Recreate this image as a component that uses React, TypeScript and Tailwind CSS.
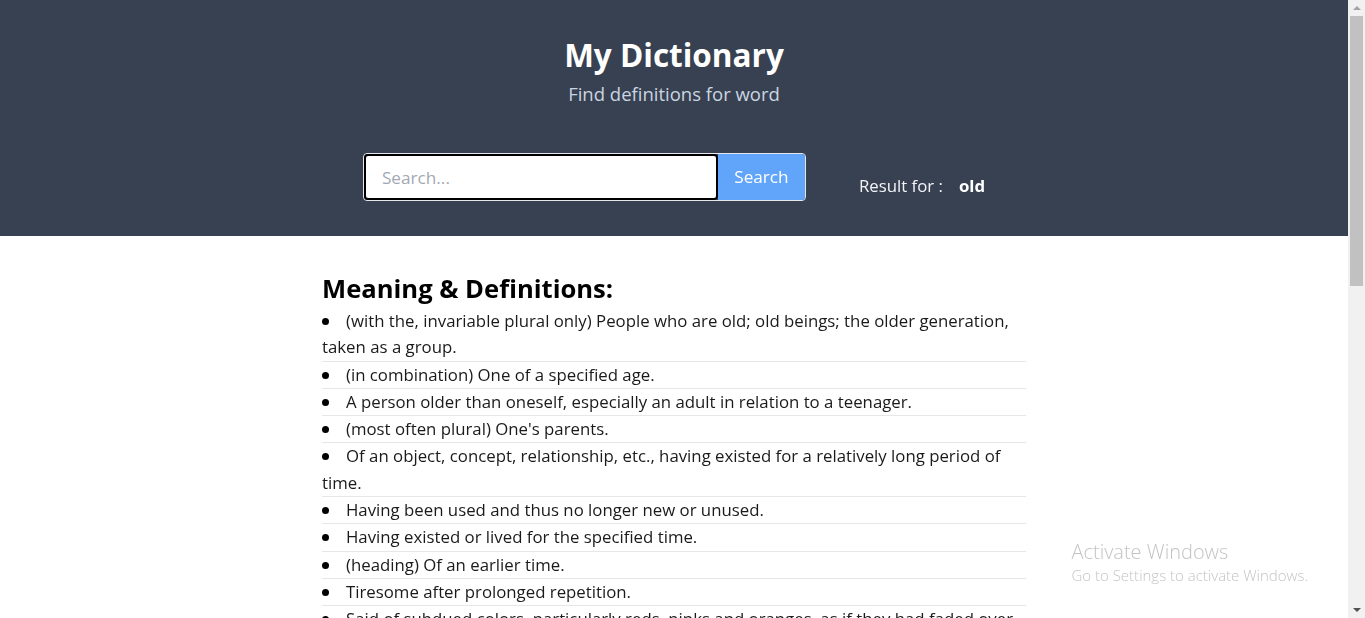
import { useState } from 'react'

const definitions = [
  '(with the, invariable plural only) People who are old; old beings; the older generation, taken as a group.',
  '(in combination) One of a specified age.',
  'A person older than oneself, especially an adult in relation to a teenager.',
  "(most often plural) One's parents.",
  'Of an object, concept, relationship, etc., having existed for a relatively long period of time.',
  'Having been used and thus no longer new or unused.',
  'Having existed or lived for the specified time.',
  '(heading) Of an earlier time.',
  'Tiresome after prolonged repetition.',
  'Said of subdued colors, particularly reds, pinks and oranges, as if they had faded over time.',
  'A grammatical intensifier, often used in describing something positive.',
  'Excellent, great, splendid.',
  'Having the characteristics of an old person.'
]

function Scrollbar() {
  return (
    <div className="flex h-full w-[17px] shrink-0 flex-col items-center bg-[#f1f1f1]">
      <div className="mt-[6px] h-0 w-0 border-x-[4px] border-b-[4px] border-x-transparent border-b-[#a3a3a3]" />
      <div className="mt-[6px] h-[270px] w-[13px] bg-[#c1c1c1]" />
      <div className="mt-auto mb-[6px] h-0 w-0 border-x-[4px] border-t-[4px] border-x-transparent border-t-[#505050]" />
    </div>
  )
}

export default function App() {
  const [query, setQuery] = useState('')
  const [word] = useState('old')

  return (
    <div className="flex h-screen overflow-hidden bg-white font-['Open_Sans',sans-serif]">
      <div className="min-w-0 flex-1 overflow-hidden">
        <header className="flex h-[236px] flex-col items-center bg-[#374151] pt-[33px]">
          <h1 className="text-[31.5px] font-bold leading-[44px] text-white">
            My Dictionary
          </h1>
          <p className="mt-[4px] text-[18.5px] leading-[26px] text-[#cbd5e1]">
            Find definitions for word
          </p>

          <div className="mt-[46px] flex items-start gap-[53px]">
            <form
              onSubmit={(e) => e.preventDefault()}
              className="flex h-[48px] rounded-[4px] border border-gray-200"
            >
              <input
                autoFocus
                value={query}
                onChange={(e) => setQuery(e.target.value)}
                placeholder="Search..."
                className="h-full w-[354px] rounded-[4px] border-2 border-black bg-white pl-[16px] text-[17.2px] text-gray-900 outline-none placeholder:text-[#a3a9b4]"
              />
              <button
                type="submit"
                className="h-full w-[87px] rounded-r-[3px] bg-[#60a5fa] text-[17.2px] text-white"
              >
                Search
              </button>
            </form>

            <div className="mt-[20px] flex items-center text-[16.8px] leading-[26px] text-gray-100">
              <span>Result for :</span>
              <span className="ml-[16px] font-bold text-white">{word}</span>
            </div>
          </div>
        </header>

        <main className="mx-auto w-[704px] pt-[36px] pb-10">
          <h2 className="text-[25.6px] font-bold leading-[34px] text-black">
            Meaning &amp; Definitions:
          </h2>
          <ul className="mt-[2px] text-[16.8px] leading-[26.3px] text-[#1a1a1a]">
            {definitions.map((d) => (
              <li key={d} className="border-b border-[#e5e7eb]">
                <span className="relative -top-[2px] mr-[17px] inline-block h-[7px] w-[7px] rounded-full bg-black" />
                {d}
              </li>
            ))}
          </ul>
        </main>
      </div>

      <Scrollbar />

      <div className="pointer-events-none fixed bottom-[32px] right-[57px] font-['Open_Sans',sans-serif] font-light text-[#c4c4c4]">
        <div className="text-[20px] leading-[24px]">Activate Windows</div>
        <div className="text-[15px] leading-[22px]">
          Go to Settings to activate Windows.
        </div>
      </div>
    </div>
  )
}
